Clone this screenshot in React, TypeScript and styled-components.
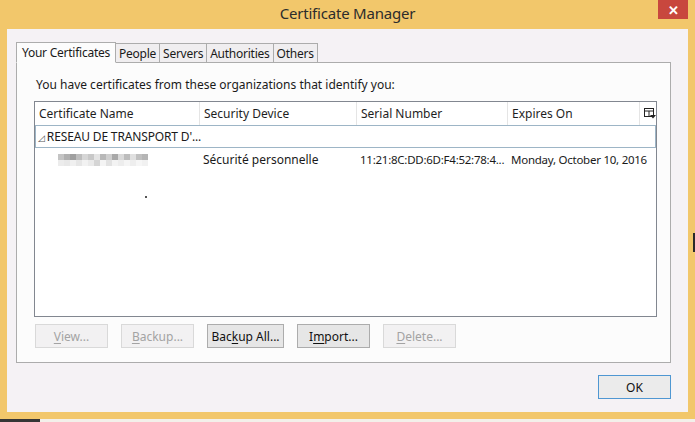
import styled, { createGlobalStyle } from "styled-components";

const GlobalStyle = createGlobalStyle`
  html, body {
    margin: 0;
    padding: 0;
    background: #f3f0ea;
  }
  * {
    box-sizing: border-box;
  }
`;

const FONT = `"Noto Sans", "Open Sans", sans-serif`;

const Window = styled.div`
  position: relative;
  width: 695px;
  height: 422px;
  display: flex;
  flex-direction: column;
  background: #f2c76b;
  font-family: ${FONT};
  color: #1a1a1a;
  overflow: hidden;
`;

const TitleBar = styled.div`
  position: relative;
  height: 29px;
  display: flex;
  align-items: center;
  justify-content: center;
`;

const Title = styled.div`
  font-size: 15px;
  letter-spacing: -0.2px;
  color: #2c2c2c;
  margin-top: -4px;
`;

const CloseButton = styled.div`
  position: absolute;
  top: 0;
  right: 7px;
  width: 30px;
  height: 19px;
  background: #c8473e;
  color: #fff;
  display: flex;
  align-items: center;
  justify-content: center;
  font-size: 13px;
  font-weight: bold;
`;

const Client = styled.div`
  height: 383px;
  margin: 0 7px;
  background: #f5f2f5;
  display: flex;
  flex-direction: column;
  padding: 12px 17px 13px 9px;
`;

const TabStrip = styled.div`
  display: flex;
  align-items: flex-end;
  height: 21px;
  position: relative;
  z-index: 1;
`;

const Tab = styled.div<{ active?: boolean }>`
  height: ${(p) => (p.active ? "21px" : "19px")};
  padding: 0 ${(p) => (p.active ? "5px" : "3px")};
  border: 1px solid #acacac;
  border-bottom: ${(p) => (p.active ? "1px solid #fcfcfc" : "none")};
  margin-left: ${(p) => (p.active ? "0" : "-1px")};
  background: ${(p) => (p.active ? "#fcfcfc" : "#f0eef0")};
  font-size: 12px;
  letter-spacing: -0.25px;
  display: flex;
  align-items: center;
  margin-bottom: ${(p) => (p.active ? "-1px" : "0")};
`;

const Panel = styled.div`
  height: 301px;
  width: 655px;
  border: 1px solid #acacac;
  background: #fcfcfc;
  display: flex;
  flex-direction: column;
  padding: 13px 13px 0 17px;
`;

const Intro = styled.div`
  font-size: 12px;
  padding-left: 2px;
  height: 25px;
`;

const ListBox = styled.div`
  height: 216px;
  border: 1px solid #828790;
  background: #fff;
  display: flex;
  flex-direction: column;
`;

const Columns = styled.div`
  display: grid;
  grid-template-columns: 165px 157px 151px 132px 1fr;
`;

const HeaderRow = styled(Columns)`
  height: 23px;
`;

const HeaderCell = styled.div`
  font-size: 12px;
  color: #1e1e1e;
  padding-left: 4px;
  display: flex;
  align-items: center;
  border-right: 1px solid #e5e5e5;
  white-space: nowrap;
  &:last-child {
    border-right: none;
    justify-content: center;
  }
`;

const GroupRow = styled.div`
  height: 23px;
  border: 1px solid #9db5c6;
  display: flex;
  align-items: center;
  font-size: 12px;
  letter-spacing: -0.15px;
  padding-left: 2px;
`;

const Toggle = styled.span`
  font-size: 9px;
  color: #555;
  margin-right: 2px;
  margin-top: 1px;
`;

const ItemRow = styled(Columns)`
  height: 23px;
  align-items: center;
`;

const Cell = styled.div<{ tight?: boolean }>`
  font-size: ${(p) => (p.tight ? "11.5px" : "12px")};
  letter-spacing: ${(p) => (p.tight ? "-0.25px" : "0")};
  padding-left: 3px;
  white-space: nowrap;
`;

const Blur = styled.div`
  margin-left: 23px;
  display: grid;
  grid-template-columns: repeat(15, 6px);
  grid-auto-rows: 6px;
  filter: blur(0.5px);
`;

const Pixel = styled.span<{ shade: string }>`
  background: ${(p) => p.shade};
`;

const Speck = styled.div`
  width: 2px;
  height: 2px;
  background: #555;
  margin: 25px 0 0 110px;
`;

const ButtonRow = styled.div`
  display: flex;
  gap: 13px;
  padding: 7px 0 0 1px;
`;

const Button = styled.div<{ disabled?: boolean; wide?: boolean }>`
  width: ${(p) => (p.wide ? "77px" : "73px")};
  height: 24px;
  border: 1px solid ${(p) => (p.disabled ? "#d9d9d9" : "#acacac")};
  background: ${(p) => (p.disabled ? "#f2f1f2" : "#e6e6e6")};
  color: ${(p) => (p.disabled ? "#a3a3a3" : "#111")};
  font-size: 12px;
  display: flex;
  align-items: center;
  justify-content: center;
  u {
    text-decoration-thickness: 1px;
    text-underline-offset: 2px;
  }
`;

const Footer = styled.div`
  flex: 1;
  display: flex;
  justify-content: flex-end;
  align-items: flex-end;
`;

const OkButton = styled(Button)`
  border-color: #4f97d2;
  background: #ebebeb;
`;

const BottomFrame = styled.div`
  height: 7px;
`;

const Taskbar = styled.div`
  height: 3px;
  display: flex;
  background: #f3f0ea;
`;

const TaskbarButton = styled.div`
  width: 40px;
  background: #353535;
`;

const EdgeMark = styled.div`
  position: absolute;
  right: 0;
  top: 233px;
  width: 2px;
  height: 19px;
  background: #2a2a2a;
`;

const ColumnPicker = () => (
  <svg width="12" height="11" viewBox="0 0 12 11">
    <rect x="0.5" y="0.5" width="9" height="8" fill="none" stroke="#222" />
    <line x1="0" y1="3" x2="10" y2="3" stroke="#222" />
    <line x1="5" y1="3" x2="5" y2="9" stroke="#222" />
    <polygon points="6,7 12,7 9,10.5" fill="#222" />
  </svg>
);

const shades = [
  "#c4c4c4", "#b0b0b0", "#9f9f9f", "#bdbdbd", "#d6d6d6", "#c8c8c8", "#e4e4e4", "#b8b8b8",
  "#cfcfcf", "#a9a9a9", "#d9d9d9", "#bcbcbc", "#e0e0e0", "#c0c0c0", "#b5b5b5",
  "#ececec", "#e8e8e8", "#f0f0f0", "#e6e6e6", "#f2f2f2", "#eaeaea", "#d5d5d5", "#f4f4f4",
  "#e2e2e2", "#f3f3f3", "#ededed", "#f5f5f5", "#eeeeee", "#f6f6f6", "#f1f1f1",
];

export default function App() {
  return (
    <>
      <GlobalStyle />
      <Window>
        <TitleBar>
          <Title>Certificate Manager</Title>
          <CloseButton>✕</CloseButton>
        </TitleBar>
        <Client>
          <TabStrip>
            <Tab active>Your Certificates</Tab>
            <Tab>People</Tab>
            <Tab>Servers</Tab>
            <Tab>Authorities</Tab>
            <Tab>Others</Tab>
          </TabStrip>
          <Panel>
            <Intro>You have certificates from these organizations that identify you:</Intro>
            <ListBox>
              <HeaderRow>
                <HeaderCell>Certificate Name</HeaderCell>
                <HeaderCell>Security Device</HeaderCell>
                <HeaderCell>Serial Number</HeaderCell>
                <HeaderCell>Expires On</HeaderCell>
                <HeaderCell>
                  <ColumnPicker />
                </HeaderCell>
              </HeaderRow>
              <GroupRow>
                <Toggle>◿</Toggle>RESEAU DE TRANSPORT D'...
              </GroupRow>
              <ItemRow>
                <Blur>
                  {shades.map((s, i) => (
                    <Pixel key={i} shade={s} />
                  ))}
                </Blur>
                <Cell>Sécurité personnelle</Cell>
                <Cell tight>11:21:8C:DD:6D:F4:52:78:4...</Cell>
                <Cell tight>Monday, October 10, 2016</Cell>
              </ItemRow>
              <Speck />
            </ListBox>
            <ButtonRow>
              <Button disabled>
                <u>V</u>iew...
              </Button>
              <Button disabled>
                <u>B</u>ackup...
              </Button>
              <Button wide>
                Bac<u>k</u>up All...
              </Button>
              <Button>
                I<u>m</u>port...
              </Button>
              <Button disabled>
                <u>D</u>elete...
              </Button>
            </ButtonRow>
          </Panel>
          <Footer>
            <OkButton>OK</OkButton>
          </Footer>
        </Client>
        <BottomFrame />
        <Taskbar>
          <TaskbarButton />
        </Taskbar>
        <EdgeMark />
      </Window>
    </>
  );
}
